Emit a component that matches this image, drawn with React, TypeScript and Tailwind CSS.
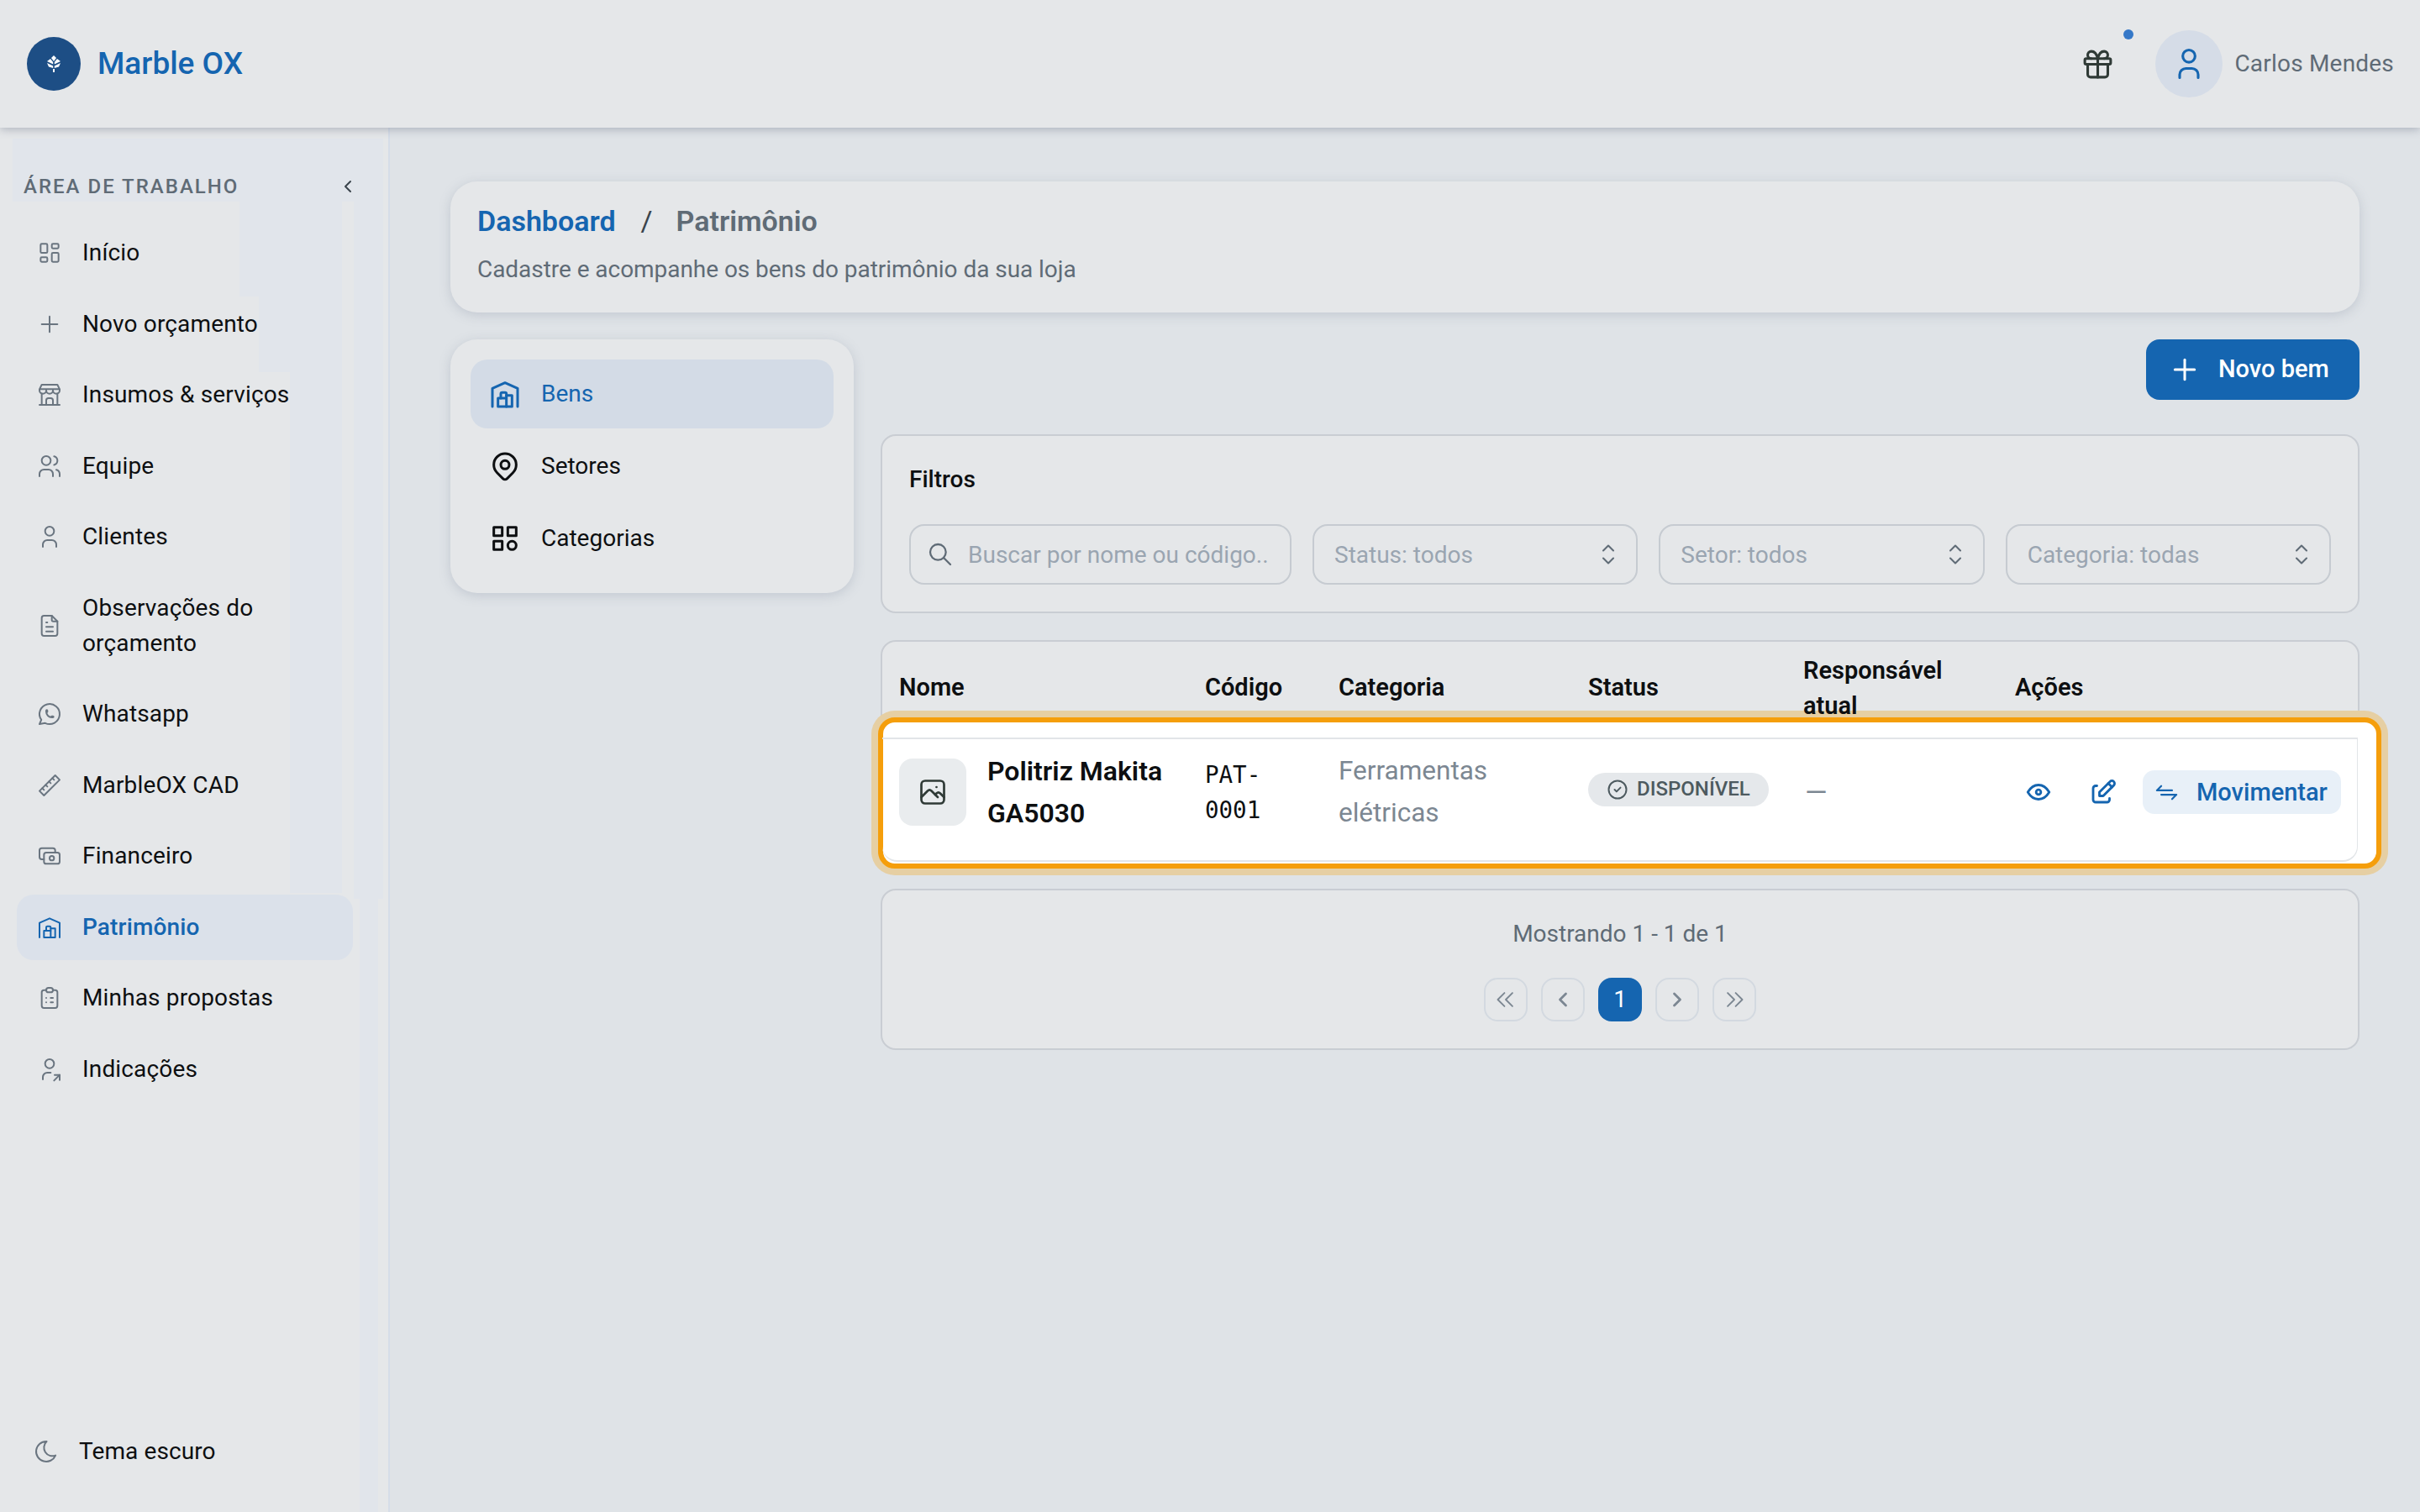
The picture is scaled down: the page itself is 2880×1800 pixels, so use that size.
import React from "react";
import {
  TbLayoutDashboard, TbPlus, TbBuildingStore, TbUsers, TbUser, TbFileText, TbBrandWhatsapp, TbRuler2, TbCash,
  TbBuildingWarehouse, TbClipboardList, TbUserShare, TbMoon, TbChevronLeft, TbChevronRight, TbGift, TbMapPin, TbCategory,
  TbSearch, TbSelector, TbPhoto, TbCircleCheck, TbEye, TbEdit, TbArrowsExchange, TbChevronsLeft, TbChevronsRight,
} from "react-icons/tb";

const nav = [
  { icon: TbLayoutDashboard, label: "Início" },
  { icon: TbPlus, label: "Novo orçamento" },
  { icon: TbBuildingStore, label: "Insumos & serviços" },
  { icon: TbUsers, label: "Equipe" },
  { icon: TbUser, label: "Clientes" },
  { icon: TbFileText, label: "Observações do orçamento" },
  { icon: TbBrandWhatsapp, label: "Whatsapp" },
  { icon: TbRuler2, label: "MarbleOX CAD" },
  { icon: TbCash, label: "Financeiro" },
  { icon: TbBuildingWarehouse, label: "Patrimônio", active: true },
  { icon: TbClipboardList, label: "Minhas propostas" },
  { icon: TbUserShare, label: "Indicações" },
];

const tabs = [
  { icon: TbBuildingWarehouse, label: "Bens", active: true },
  { icon: TbMapPin, label: "Setores" },
  { icon: TbCategory, label: "Categorias" },
];

const cols = "grid grid-cols-[364px_159px_297px_256px_252px_1fr]";

function Select({ label }: { label: string }) {
  return (
    <div className="flex h-[72px] items-center justify-between rounded-[18px] border-2 border-[#c6cbd1] pl-[24px] pr-[15px] text-[28px] text-[#9aa5b1]">
      <span className="pt-[1px]">{label}</span>
      <TbSelector size={36} strokeWidth={1.4} className="text-[#5f6b76]" />
    </div>
  );
}

function PageButton({ children, active }: { children: React.ReactNode; active?: boolean }) {
  return (
    <div className={active
      ? "flex h-[52px] w-[52px] items-center justify-center rounded-[16px] bg-[#1565b0] text-[28px] text-white"
      : "flex h-[52px] w-[52px] items-center justify-center rounded-[16px] border-2 border-[#d3d9e0] text-[#7c8792]"}>
      {children}
    </div>
  );
}

export default function App() {
  return (
    <div className="flex h-screen w-full flex-col overflow-hidden bg-[#dfe3e7] font-['Roboto',sans-serif] text-[28px] text-[#0d0f11]">
      <header className="relative z-20 flex h-[152px] shrink-0 items-center justify-between bg-[#e5e7e9] pl-[32px] pr-[31px] shadow-[0_2px_10px_rgba(90,100,120,0.4)]">
        <div className="flex items-center gap-[20px]">
          <div className="flex h-[64px] w-[64px] items-center justify-center rounded-full bg-[#1d4e85]">
            <svg width="20" height="24" viewBox="0 0 20 24" fill="#fff">
              <path d="M10 2 L13 5 L10 9 L7 5 Z" />
              <path d="M6 6 L9.2 10 L9.2 12.5 L2 9 Z" />
              <path d="M14 6 L10.8 10 L10.8 12.5 L18 9 Z" />
              <path d="M2 11 L9.2 14.5 L9.2 17 L4 15.5 Z" />
              <path d="M18 11 L10.8 14.5 L10.8 17 L16 15.5 Z" />
              <path d="M9 18 H11 V22 H9 Z" />
            </svg>
          </div>
          <span className="text-[37px] font-medium text-[#1565b0]">Marble OX</span>
        </div>
        <div className="flex items-center">
          <div className="relative mr-[48px]">
            <TbGift size={41} strokeWidth={1.8} className="text-[#2f3a36]" />
            <span className="absolute -right-[22px] -top-[21px] h-[12px] w-[12px] rounded-full bg-[#3578c8]" />
          </div>
          <div className="flex h-[80px] w-[80px] items-center justify-center rounded-full bg-[#d5dce7]">
            <TbUser size={44} strokeWidth={1.7} className="text-[#1565b0]" />
          </div>
          <span className="ml-[14px] tracking-[0.2px] text-[#5f6b76]">Carlos Mendes</span>
        </div>
      </header>

      <div className="flex min-h-0 flex-1">
        <aside className="relative flex w-[464px] shrink-0 flex-col border-r-2 border-[#d5dde8] bg-[#e5e7e9]">
          <div className="absolute left-[15px] right-[6px] top-[13px] h-[75px] bg-[#e1e5eb]" />
          <div className="absolute left-[285px] top-[88px] h-[113px] w-[122px] bg-[#e1e5eb]" />
          <div className="absolute left-[308px] top-[201px] h-[90px] w-[99px] bg-[#e1e5eb]" />
          <div className="absolute left-[345px] top-[291px] h-[620px] w-[62px] bg-[#e1e5eb]" />
          <div className="absolute left-[421px] right-[6px] top-[88px] h-[830px] bg-[#e1e5eb]" />
          <div className="absolute left-[428px] right-[12px] top-[918px] bottom-0 bg-[#e1e5eb]" />

          <div className="relative flex items-center justify-between pl-[28px] pr-[36px] pt-[52px]">
            <span className="text-[24px] font-medium leading-[36px] tracking-[2px] text-[#5f6b76]">ÁREA DE TRABALHO</span>
            <TbChevronLeft size={24} strokeWidth={2} className="text-[#3a444c]" />
          </div>
          <nav className="relative mt-[22px] flex flex-col gap-[6.5px] pl-[20px] pr-[42px]">
            {nav.map((n) => {
              const Icon = n.icon;
              return (
                <div key={n.label} className={n.active
                  ? "flex items-center gap-[23px] rounded-[20px] bg-[#dbe1ea] py-[18px] pl-[23px] pr-[20px] font-medium text-[#1565b0]"
                  : "flex items-center gap-[23px] rounded-[20px] py-[18px] pl-[23px] pr-[20px]"}>
                  <Icon size={32} strokeWidth={1.5} className={n.active ? "shrink-0 text-[#1565b0]" : "shrink-0 text-[#6a7580]"} />
                  <span className="leading-[42px] tracking-[0.15px]">{n.label}</span>
                </div>
              );
            })}
          </nav>
          <div className="relative mt-auto flex items-center gap-[23px] pb-[51px] pl-[39px]">
            <TbMoon size={32} strokeWidth={1.5} className="text-[#6a7580]" />
            <span className="leading-[42px] tracking-[0.1px]">Tema escuro</span>
          </div>
        </aside>

        <main className="min-w-0 flex-1 px-[72px] pt-[64px]">
          <section className="h-[156px] rounded-[32px] bg-[#e5e7e9] pl-[32px] pr-[33px] pt-[23px] shadow-[0_3px_14px_rgba(120,130,150,0.28)]">
            <div className="flex items-center text-[34px] font-semibold leading-[48px]">
              <span className="text-[#1565b0]">Dashboard</span>
              <span className="ml-[30px] mr-[28px] font-normal text-[#3a444c]">/</span>
              <span className="text-[#5f6b76]">Patrimônio</span>
            </div>
            <p className="mt-[13px] leading-[42px] tracking-[-0.05px] text-[#5f6b76]">Cadastre e acompanhe os bens do patrimônio da sua loja</p>
          </section>

          <div className="mt-[32px] flex items-start gap-[32px]">
            <aside className="flex w-[480px] shrink-0 flex-col gap-[4px] rounded-[32px] bg-[#e5e7e9] px-[24px] py-[24px] shadow-[0_3px_14px_rgba(120,130,150,0.28)]">
              {tabs.map((t) => {
                const Icon = t.icon;
                return (
                  <div key={t.label} className={t.active
                    ? "flex h-[82px] items-center gap-[23px] rounded-[20px] bg-[#d3dbe6] pl-[21px] text-[#1565b0]"
                    : "flex h-[82px] items-center gap-[23px] rounded-[20px] pl-[21px]"}>
                    <Icon size={40} strokeWidth={1.8} />
                    <span>{t.label}</span>
                  </div>
                );
              })}
            </aside>

            <div className="min-w-0 flex-1">
              <div className="flex justify-end">
                <button className="flex h-[72px] w-[254px] items-center gap-[20px] rounded-[16px] bg-[#1565b0] pl-[26px] text-[29px] font-medium text-white">
                  <TbPlus size={40} strokeWidth={1.8} />
                  <span>Novo bem</span>
                </button>
              </div>

              <section className="mt-[41px] h-[213px] rounded-[18px] border-2 border-[#c9cdd3] bg-[#e5e7e9] px-[32px] pt-[31px]">
                <h2 className="font-medium leading-[42px]">Filtros</h2>
                <div className="mt-[32px] grid grid-cols-[455px_1fr_1fr_1fr] gap-[25px]">
                  <div className="flex h-[72px] items-center gap-[17px] overflow-hidden whitespace-nowrap rounded-[18px] border-2 border-[#c6cbd1] pl-[19px] text-[#9aa5b1]">
                    <TbSearch size={32} strokeWidth={1.7} className="shrink-0 text-[#5f6b76]" />
                    <span className="w-[360px] overflow-hidden pt-[1px]">Buscar por nome ou código..</span>
                  </div>
                  <Select label="Status: todos" />
                  <Select label="Setor: todos" />
                  <Select label="Categoria: todas" />
                </div>
              </section>

              <section className="relative mt-[32px] h-[264px] rounded-[18px] border-2 border-[#c9cdd3] bg-[#e5e7e9]">
                <div className="absolute -left-[5px] -right-[28px] top-[90px] h-[180px] rounded-[20px] border-[6px] border-[#f59e0b] bg-white shadow-[0_0_0_8px_#e6cfa3]" />
                <div className={`relative h-[116px] border-b-2 border-[#e2e5e8] pb-[4px] text-[29px] font-semibold ${cols}`}>
                  <div className="self-center pl-[20px]">Nome</div>
                  <div className="self-center pl-[20px]">Código</div>
                  <div className="self-center pl-[20px]">Categoria</div>
                  <div className="self-center pl-[20px]">Status</div>
                  <div className="w-[220px] self-center pl-[20px] leading-[42px]">Responsável atual</div>
                  <div className="self-center pl-[20px]">Ações</div>
                </div>
                <div className={`relative h-[146px] items-center rounded-b-[18px] border-b-2 border-r border-[#e2e5e8] pb-[18px] ${cols}`}>
                  <div className="flex items-center gap-[25px] pl-[20px]">
                    <div className="flex h-[80px] w-[80px] shrink-0 items-center justify-center rounded-[16px] bg-[#e9ecee]">
                      <TbPhoto size={36} strokeWidth={1.8} className="text-[#2f3a36]" />
                    </div>
                    <div className="text-[32px] font-semibold leading-[50px]">Politriz Makita GA5030</div>
                  </div>
                  <div className="w-[120px] pl-[20px] font-['DejaVu_Sans_Mono',monospace] text-[27.5px] leading-[42px]">PAT-0001</div>
                  <div className="w-[240px] pl-[20px] text-[31.5px] leading-[50px] text-[#7c8792]">Ferramentas elétricas</div>
                  <div className="pl-[20px]">
                    <span className="inline-flex h-[40px] w-[215px] items-center gap-[9px] rounded-full bg-[#e5e8eb] pb-[2px] pl-[21px] text-[24px] font-medium text-[#4d5a5f]">
                      <TbCircleCheck size={28} strokeWidth={1.7} className="mt-[2px]" />
                      DISPONÍVEL
                    </span>
                  </div>
                  <div className="pl-[22px] text-[34px] text-[#7c8792]">—</div>
                  <div className="flex items-center gap-[25px] pl-[22px]">
                    <div className="flex h-[52px] w-[52px] items-center justify-center text-[#1565b0]">
                      <TbEye size={34} strokeWidth={2} />
                    </div>
                    <div className="flex h-[52px] w-[52px] items-center justify-center text-[#1565b0]">
                      <TbEdit size={36} strokeWidth={1.9} />
                    </div>
                    <div className="-ml-[4px] flex h-[52px] w-[236px] shrink-0 items-center gap-[20px] rounded-[14px] bg-[#e8f0f8] pl-[13px] text-[29px] font-medium text-[#1565b0]">
                      <TbArrowsExchange size={31} strokeWidth={1.7} className="-scale-x-100" />
                      <span className="pt-[2px]">Movimentar</span>
                    </div>
                  </div>
                </div>
              </section>

              <section className="mt-[32px] flex h-[192px] flex-col items-center rounded-[18px] border-2 border-[#c9cdd3] bg-[#e5e7e9] pt-[31px]">
                <div className="leading-[42px] text-[#5f6b76]">Mostrando 1 - 1 de 1</div>
                <div className="mt-[31px] flex gap-[16px]">
                  <PageButton><TbChevronsLeft size={38} strokeWidth={1.2} /></PageButton>
                  <PageButton><TbChevronLeft size={28} strokeWidth={2.4} /></PageButton>
                  <PageButton active>1</PageButton>
                  <PageButton><TbChevronRight size={28} strokeWidth={2.4} /></PageButton>
                  <PageButton><TbChevronsRight size={38} strokeWidth={1.2} /></PageButton>
                </div>
              </section>
            </div>
          </div>
        </main>
      </div>
    </div>
  );
}
